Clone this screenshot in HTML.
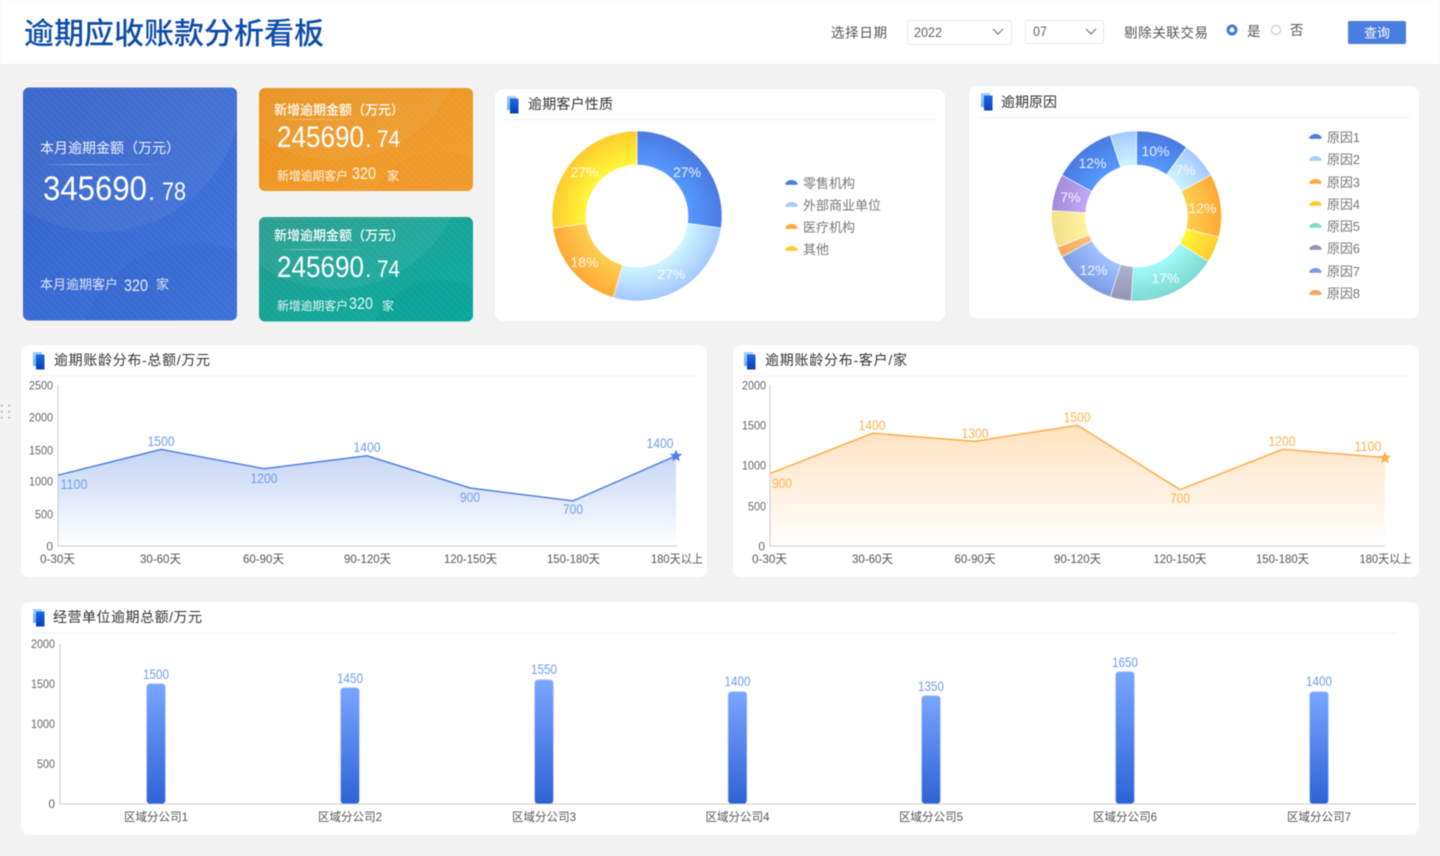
<!DOCTYPE html>
<html lang="zh"><head><meta charset="utf-8"><title>逾期应收账款分析看板</title>
<style>
html,body{margin:0;padding:0;background:#f2f2f2;width:1440px;height:856px;overflow:hidden}
svg{display:block;filter:blur(.4px)}
text{font-family:"Liberation Sans","Noto Sans CJK SC",sans-serif}
.pt{font-size:14px;fill:#333}
.lg{font-size:13px;fill:#777}
.ax{font-size:12px;fill:#666}
.xl{font-size:12px;fill:#555;text-anchor:middle}
.bl{font-size:13.5px;fill:#6f9cf2;text-anchor:middle}
.ol{font-size:13.5px;fill:#ffb44f;text-anchor:middle}
.pl{font-size:14px;fill:#fff;fill-opacity:.88;text-anchor:middle}
.w{fill:#fff}
.sub{font-size:12px;fill:#fff;fill-opacity:.88}
.hd{font-size:13.5px;fill:#555}
</style></head><body>
<svg xmlns="http://www.w3.org/2000/svg" width="1440" height="856" viewBox="0 0 1440 856">
<defs>
<linearGradient id="cb" x1="0" y1="0" x2="1" y2="1"><stop offset="0" stop-color="#3060c6"/><stop offset="1" stop-color="#4274de"/></linearGradient>
<linearGradient id="co" x1="0" y1="0" x2="1" y2="1"><stop offset="0" stop-color="#e68f18"/><stop offset="1" stop-color="#f6a232"/></linearGradient>
<linearGradient id="ct" x1="0" y1="0" x2="1" y2="1"><stop offset="0" stop-color="#219a8b"/><stop offset="1" stop-color="#0aafa2"/></linearGradient>
<pattern id="st" width="5" height="5" patternUnits="userSpaceOnUse" patternTransform="rotate(45)"><rect width="5" height="1.6" fill="#fff" fill-opacity=".04"/></pattern>
<linearGradient id="ln" x1="0" x2="1" y1="0" y2="0"><stop offset="0" stop-color="#fff" stop-opacity=".05"/><stop offset=".3" stop-color="#fff" stop-opacity=".4"/><stop offset="1" stop-color="#fff" stop-opacity="0"/></linearGradient>
<clipPath id="c1"><rect x="23" y="87.5" width="214" height="233" rx="6"/></clipPath>
<clipPath id="c2"><rect x="259" y="88" width="214" height="103" rx="6"/></clipPath>
<clipPath id="c3"><rect x="259" y="217" width="214" height="104.500" rx="6"/></clipPath>
<linearGradient id="i1" x1="0" x2="0" y1="0" y2="1"><stop offset="0" stop-color="#a5d0fb"/><stop offset="1" stop-color="#6fa8f5"/></linearGradient>
<linearGradient id="i2" x1="0" x2="0" y1="0" y2="1"><stop offset="0" stop-color="#1a6be6"/><stop offset="1" stop-color="#0a3fb4"/></linearGradient>
<symbol id="ic" overflow="visible"><rect x="0" y="0" width="9" height="14" fill="url(#i1)"/><rect x="3" y="2.500" width="8.500" height="15" fill="url(#i2)"/></symbol>
<radialGradient id="a1" gradientUnits="userSpaceOnUse" cx="637" cy="216" r="85"><stop offset=".6" stop-color="#5599ff"/><stop offset="1" stop-color="#4a7ae0"/></radialGradient>
<radialGradient id="a2" gradientUnits="userSpaceOnUse" cx="637" cy="216" r="85"><stop offset=".6" stop-color="#d0f6ff"/><stop offset="1" stop-color="#a4c8ff"/></radialGradient>
<radialGradient id="a3" gradientUnits="userSpaceOnUse" cx="637" cy="216" r="85"><stop offset=".6" stop-color="#ffcf50"/><stop offset="1" stop-color="#ffa836"/></radialGradient>
<radialGradient id="a4" gradientUnits="userSpaceOnUse" cx="637" cy="216" r="85"><stop offset=".6" stop-color="#fff73a"/><stop offset="1" stop-color="#ffcb2f"/></radialGradient>
<radialGradient id="b1" gradientUnits="userSpaceOnUse" cx="1136.500" cy="216" r="85"><stop offset=".6" stop-color="#5599ff"/><stop offset="1" stop-color="#4a7ae0"/></radialGradient>
<radialGradient id="b2" gradientUnits="userSpaceOnUse" cx="1136.500" cy="216" r="85"><stop offset=".6" stop-color="#d0f6ff"/><stop offset="1" stop-color="#a4c8ff"/></radialGradient>
<radialGradient id="b3" gradientUnits="userSpaceOnUse" cx="1136.500" cy="216" r="85"><stop offset=".6" stop-color="#ffcf50"/><stop offset="1" stop-color="#ffa836"/></radialGradient>
<radialGradient id="b4" gradientUnits="userSpaceOnUse" cx="1136.500" cy="216" r="85"><stop offset=".6" stop-color="#fff73a"/><stop offset="1" stop-color="#ffcb2f"/></radialGradient>
<radialGradient id="b5" gradientUnits="userSpaceOnUse" cx="1136.500" cy="216" r="85"><stop offset=".6" stop-color="#a0fbfb"/><stop offset="1" stop-color="#7ed9d0"/></radialGradient>
<radialGradient id="b6" gradientUnits="userSpaceOnUse" cx="1136.500" cy="216" r="85"><stop offset=".6" stop-color="#b0b0d0"/><stop offset="1" stop-color="#9494b4"/></radialGradient>
<radialGradient id="b7" gradientUnits="userSpaceOnUse" cx="1136.500" cy="216" r="85"><stop offset=".6" stop-color="#a0c4ff"/><stop offset="1" stop-color="#7b9ae6"/></radialGradient>
<radialGradient id="b8" gradientUnits="userSpaceOnUse" cx="1136.500" cy="216" r="85"><stop offset=".6" stop-color="#ffc27a"/><stop offset="1" stop-color="#f3a65e"/></radialGradient>
<radialGradient id="b9" gradientUnits="userSpaceOnUse" cx="1136.500" cy="216" r="85"><stop offset=".6" stop-color="#fff3a0"/><stop offset="1" stop-color="#f3e08a"/></radialGradient>
<radialGradient id="b10" gradientUnits="userSpaceOnUse" cx="1136.500" cy="216" r="85"><stop offset=".6" stop-color="#c4a8f8"/><stop offset="1" stop-color="#a08ad8"/></radialGradient>
<linearGradient id="fb" x1="0" x2="0" y1="0" y2="1"><stop offset="0" stop-color="#4a7de0" stop-opacity=".33"/><stop offset="1" stop-color="#4a7de0" stop-opacity="0"/></linearGradient>
<linearGradient id="fo" x1="0" x2="0" y1="0" y2="1"><stop offset="0" stop-color="#ffa63c" stop-opacity=".33"/><stop offset="1" stop-color="#ffa63c" stop-opacity="0"/></linearGradient>
<linearGradient id="bar" x1="0" x2="0" y1="0" y2="1"><stop offset="0" stop-color="#7aa6ff"/><stop offset="1" stop-color="#2e62d6"/></linearGradient>
<symbol id="fan" overflow="visible"><path d="M0 4.500C1.500 1.500 4 .5 6.500 .5S11.500 1.500 13 4.500L10.500 5.800Q9.500 4.500 8.500 5.800Q6.500 4.500 4.500 5.800Q3.500 4.500 2.500 5.800Z"/></symbol>
</defs>

<rect width="1440" height="856" fill="#f2f2f2"/>
<rect width="1440" height="64" fill="#fff"/>
<text x="24" y="44" font-size="30" font-weight="500" fill="#0d4cab" textLength="300" lengthAdjust="spacingAndGlyphs">逾期应收账款分析看板</text>

<!-- filters -->
<text x="831" y="37.500" class="hd" textLength="56">选择日期</text>
<rect x="907.500" y="20.500" width="104" height="24" rx="2" fill="#fff" stroke="#e8e8e8"/>
<text x="914" y="37" font-size="13.500" fill="#666" textLength="28" lengthAdjust="spacingAndGlyphs">2022</text>
<path d="M993 29l5 5 5-5" fill="none" stroke="#777" stroke-width="1.200"/>
<rect x="1025.500" y="20.500" width="78" height="23" rx="2" fill="#fff" stroke="#e8e8e8"/>
<text x="1033" y="36" font-size="13.500" fill="#666" textLength="14" lengthAdjust="spacingAndGlyphs">07</text>
<path d="M1086 29l5 5 5-5" fill="none" stroke="#777" stroke-width="1.200"/>
<text x="1124" y="37.500" class="hd" textLength="84">剔除关联交易</text>
<circle cx="1232" cy="30" r="4" fill="#fff" stroke="#3a78dc" stroke-width="3"/>
<text x="1247" y="36" class="hd" font-size="13.500" textLength="14">是</text>
<circle cx="1276" cy="30" r="4.500" fill="#fff" stroke="#c8ccd4" stroke-width="1.200"/>
<text x="1290" y="35" class="hd" font-size="13.500" textLength="14">否</text>
<rect x="1348" y="21" width="58" height="23" rx="1.500" fill="#4a7de0"/>
<text x="1364" y="37.500" font-size="13" class="w" textLength="26">查询</text>

<!-- blue card -->
<g clip-path="url(#c1)">
<rect x="23" y="87.500" width="214" height="233" fill="url(#cb)"/>
<circle cx="100" cy="90" r="142" fill="#fff" fill-opacity=".05"/>
<circle cx="195" cy="360" r="117" fill="#1f4fb8" fill-opacity=".12"/>
<rect x="23" y="87.500" width="214" height="233" fill="url(#st)"/>
</g>
<text x="40" y="153" font-size="14" class="w" fill-opacity=".92" textLength="140">本月逾期金额（万元）</text>
<rect x="45" y="164" width="120" height="1" fill="url(#ln)"/>
<text x="43" y="200" font-size="34" class="w" textLength="104" lengthAdjust="spacingAndGlyphs">345690</text>
<text x="148" y="200" font-size="26" class="w" fill-opacity=".9">.</text>
<text x="162" y="200" font-size="25" class="w" textLength="24" lengthAdjust="spacingAndGlyphs">78</text>
<text x="40" y="289" font-size="13" class="w" fill-opacity=".82" textLength="78">本月逾期客户</text>
<text x="124" y="291" font-size="17" class="w" fill-opacity=".88" textLength="24" lengthAdjust="spacingAndGlyphs">320</text>
<text x="156" y="289" font-size="13" class="w" fill-opacity=".82">家</text>

<!-- orange card -->
<g clip-path="url(#c2)">
<rect x="259" y="88" width="214" height="103" fill="url(#co)"/>
<circle cx="335" cy="30" r="130" fill="#fff" fill-opacity=".06"/>
<circle cx="440" cy="225" r="74" fill="#c87a10" fill-opacity=".1"/>
<rect x="259" y="88" width="214" height="103" fill="url(#st)"/>
</g>
<text x="274" y="114.500" font-size="13" class="w" font-weight="500" textLength="130">新增逾期金额（万元）</text>
<rect x="280" y="119" width="85" height="1" fill="url(#ln)"/>
<text x="277" y="147" font-size="30" class="w" textLength="87" lengthAdjust="spacingAndGlyphs">245690</text>
<text x="365" y="147" font-size="24" class="w" fill-opacity=".9">.</text>
<text x="377" y="147" font-size="24" class="w" textLength="23" lengthAdjust="spacingAndGlyphs">74</text>
<text x="277" y="180" class="sub" textLength="71">新增逾期客户</text>
<text x="352" y="179" font-size="17" class="w" fill-opacity=".9" textLength="24" lengthAdjust="spacingAndGlyphs">320</text>
<text x="387" y="180" class="sub" font-size="11">家</text>

<!-- teal card -->
<g clip-path="url(#c3)">
<rect x="259" y="217" width="214" height="104.500" fill="url(#ct)"/>
<circle cx="335" cy="159" r="130" fill="#fff" fill-opacity=".06"/>
<circle cx="440" cy="354" r="74" fill="#00786c" fill-opacity=".1"/>
<rect x="259" y="217" width="214" height="104.500" fill="url(#st)"/>
</g>
<text x="274" y="240" font-size="13" class="w" font-weight="500" textLength="130">新增逾期金额（万元）</text>
<rect x="280" y="249" width="85" height="1" fill="url(#ln)"/>
<text x="277" y="277" font-size="30" class="w" textLength="87" lengthAdjust="spacingAndGlyphs">245690</text>
<text x="365" y="277" font-size="24" class="w" fill-opacity=".9">.</text>
<text x="377" y="277" font-size="24" class="w" textLength="23" lengthAdjust="spacingAndGlyphs">74</text>
<text x="277" y="310" class="sub" textLength="71">新增逾期客户</text>
<text x="349" y="309" font-size="17" class="w" fill-opacity=".9" textLength="24" lengthAdjust="spacingAndGlyphs">320</text>
<text x="382" y="310" class="sub" font-size="11">家</text>

<!-- donut panel 1 -->
<rect x="495" y="89" width="450" height="232" rx="8" fill="#fff"/>
<use href="#ic" x="507" y="96"/>
<text x="528" y="109" class="pt" textLength="85">逾期客户性质</text>
<rect x="504" y="119" width="432" height="1" fill="#f1f2f4"/>
<g stroke="#fff" stroke-opacity=".75" stroke-width=".8">
<path fill="url(#a1)" d="M637 131A85 85 0 0 1 721.130 228.100L687.480 223.260A51 51 0 0 0 637 165Z"/>
<path fill="url(#a2)" d="M721.130 228.100A85 85 0 0 1 613.050 297.560L622.630 264.930A51 51 0 0 0 687.480 223.260Z"/>
<path fill="url(#a3)" d="M613.050 297.560A85 85 0 0 1 552.870 228.100L586.520 223.260A51 51 0 0 0 622.630 264.930Z"/>
<path fill="url(#a4)" d="M552.870 228.100A85 85 0 0 1 637 131L637 165A51 51 0 0 0 586.520 223.260Z"/>
</g>
<text x="687" y="177" class="pl">27%</text><text x="671.500" y="279" class="pl">27%</text><text x="584.500" y="267" class="pl">18%</text><text x="584.500" y="177" class="pl">27%</text>
<use href="#fan" x="785" y="179.500" fill="#4a7de0"/><text x="803" y="188" class="lg">零售机构</text>
<use href="#fan" x="785" y="201.500" fill="#a6cbff"/><text x="803" y="210" class="lg">外部商业单位</text>
<use href="#fan" x="785" y="223.500" fill="#ffa83a"/><text x="803" y="232" class="lg">医疗机构</text>
<use href="#fan" x="785" y="245.500" fill="#ffcb30"/><text x="803" y="254" class="lg">其他</text>

<!-- donut panel 2 -->
<rect x="969" y="86" width="450" height="232.500" rx="8" fill="#fff"/>
<use href="#ic" x="981" y="93"/>
<text x="1001" y="107" class="pt" textLength="56">逾期原因</text>
<rect x="978" y="117" width="432" height="1" fill="#f1f2f4"/>
<g stroke="#fff" stroke-opacity=".75" stroke-width=".8">
<path fill="url(#b1)" d="M1136.500 131A85 85 0 0 1 1186.460 147.240L1166.480 174.740A51 51 0 0 0 1136.500 165Z"/>
<path fill="url(#b2)" d="M1186.460 147.240A85 85 0 0 1 1210.990 175.050L1181.190 191.430A51 51 0 0 0 1166.480 174.740Z"/>
<path fill="url(#b3)" d="M1210.990 175.050A85 85 0 0 1 1218.830 237.140L1185.900 228.680A51 51 0 0 0 1181.190 191.430Z"/>
<path fill="url(#b4)" d="M1218.830 237.140A85 85 0 0 1 1208.270 261.540L1179.560 243.330A51 51 0 0 0 1185.900 228.680Z"/>
<path fill="url(#b5)" d="M1208.270 261.540A85 85 0 0 1 1131.160 300.830L1133.300 266.900A51 51 0 0 0 1179.560 243.330Z"/>
<path fill="url(#b6)" d="M1131.160 300.830A85 85 0 0 1 1110.240 296.840L1120.740 264.510A51 51 0 0 0 1133.300 266.900Z"/>
<path fill="url(#b7)" d="M1110.240 296.840A85 85 0 0 1 1062.010 256.950L1091.810 240.570A51 51 0 0 0 1120.740 264.510Z"/>
<path fill="url(#b8)" d="M1062.010 256.950A85 85 0 0 1 1057.470 247.290L1089.080 234.770A51 51 0 0 0 1091.810 240.570Z"/>
<path fill="url(#b9)" d="M1057.470 247.290A85 85 0 0 1 1051.670 210.660L1085.600 212.800A51 51 0 0 0 1089.080 234.770Z"/>
<path fill="url(#b10)" d="M1051.670 210.660A85 85 0 0 1 1062.010 175.050L1091.810 191.430A51 51 0 0 0 1085.600 212.800Z"/>
<path fill="url(#b1)" d="M1062.010 175.050A85 85 0 0 1 1110.240 135.160L1120.740 167.490A51 51 0 0 0 1091.810 191.430Z"/>
<path fill="url(#b2)" d="M1110.240 135.160A85 85 0 0 1 1136.500 131L1136.500 165A51 51 0 0 0 1120.740 167.490Z"/>
</g>
<text x="1155.500" y="156" class="pl">10%</text><text x="1185.500" y="175" class="pl">7%</text><text x="1202.500" y="213" class="pl">12%</text><text x="1165.500" y="283" class="pl">17%</text><text x="1093.500" y="275" class="pl">12%</text><text x="1070.500" y="202" class="pl">7%</text><text x="1092.500" y="168" class="pl">12%</text>
<use href="#fan" x="1309" y="133.500" fill="#4a7de0"/><text x="1327" y="142" class="lg" textLength="33">原因1</text>
<use href="#fan" x="1309" y="155.500" fill="#a6cbff"/><text x="1327" y="164" class="lg" textLength="33">原因2</text>
<use href="#fan" x="1309" y="178.500" fill="#ffa83a"/><text x="1327" y="187" class="lg" textLength="33">原因3</text>
<use href="#fan" x="1309" y="200.500" fill="#ffcb30"/><text x="1327" y="209" class="lg" textLength="33">原因4</text>
<use href="#fan" x="1309" y="222.500" fill="#7ed9d0"/><text x="1327" y="231" class="lg" textLength="33">原因5</text>
<use href="#fan" x="1309" y="244.500" fill="#9494b4"/><text x="1327" y="253" class="lg" textLength="33">原因6</text>
<use href="#fan" x="1309" y="267.500" fill="#7b9ae6"/><text x="1327" y="276" class="lg" textLength="33">原因7</text>
<use href="#fan" x="1309" y="289.500" fill="#f3a65e"/><text x="1327" y="298" class="lg" textLength="33">原因8</text>

<!-- drag handle -->
<g fill="#9a9a9a"><rect x="1" y="405" width="1.500" height="1.500"/><rect x="8.500" y="405" width="1.500" height="1.500"/><rect x="1" y="411" width="1.500" height="1.500"/><rect x="8.500" y="411" width="1.500" height="1.500"/><rect x="1" y="417" width="1.500" height="1.500"/><rect x="8.500" y="417" width="1.500" height="1.500"/></g>

<!-- line chart 1 -->
<rect x="21" y="345" width="686" height="232" rx="8" fill="#fff"/>
<use href="#ic" x="33" y="352"/>
<text x="54" y="365" class="pt" textLength="156">逾期账龄分布-总额/万元</text>
<rect x="31" y="375.500" width="667" height="1" fill="#f1f2f4"/>
<path d="M58 475.200L161 449.400L264 468.700L367 455.800L470 488L573 500.900L676 455.800V546H58Z" fill="url(#fb)"/>
<path d="M58 385V546H677" fill="none" stroke="#ccc"/>
<path d="M58 475.200L161 449.400L264 468.700L367 455.800L470 488L573 500.900L676 455.800" fill="none" stroke="#4f80e6" stroke-width="1.500"/>
<path d="M676 449.500l1.700 4.200 4.500.3-3.500 2.900 1.100 4.400-3.800-2.400-3.800 2.400 1.100-4.400-3.500-2.900 4.500-.3z" fill="#4f80e6"/>
<text x="53" y="389.500" text-anchor="end" class="ax" textLength="24" lengthAdjust="spacingAndGlyphs">2500</text>
<text x="53" y="421.500" text-anchor="end" class="ax" textLength="24" lengthAdjust="spacingAndGlyphs">2000</text>
<text x="53" y="454.500" text-anchor="end" class="ax" textLength="24" lengthAdjust="spacingAndGlyphs">1500</text>
<text x="53" y="485.500" text-anchor="end" class="ax" textLength="24" lengthAdjust="spacingAndGlyphs">1000</text>
<text x="53" y="518.500" text-anchor="end" class="ax" textLength="18" lengthAdjust="spacingAndGlyphs">500</text>
<text x="53" y="550.500" text-anchor="end" class="ax">0</text>
<text x="57.500" y="563" class="xl" textLength="35" lengthAdjust="spacingAndGlyphs">0-30天</text>
<text x="160.500" y="563" class="xl" textLength="41" lengthAdjust="spacingAndGlyphs">30-60天</text>
<text x="263.500" y="563" class="xl" textLength="41" lengthAdjust="spacingAndGlyphs">60-90天</text>
<text x="367.500" y="563" class="xl" textLength="47" lengthAdjust="spacingAndGlyphs">90-120天</text>
<text x="470.500" y="563" class="xl" textLength="53" lengthAdjust="spacingAndGlyphs">120-150天</text>
<text x="573.500" y="563" class="xl" textLength="53" lengthAdjust="spacingAndGlyphs">150-180天</text>
<text x="677" y="563" class="xl" textLength="52" lengthAdjust="spacingAndGlyphs">180天以上</text>
<text x="74" y="489" class="bl" textLength="27" lengthAdjust="spacingAndGlyphs">1100</text>
<text x="161" y="446" class="bl" textLength="27" lengthAdjust="spacingAndGlyphs">1500</text>
<text x="264" y="483" class="bl" textLength="27" lengthAdjust="spacingAndGlyphs">1200</text>
<text x="367" y="452" class="bl" textLength="27" lengthAdjust="spacingAndGlyphs">1400</text>
<text x="470" y="502" class="bl" textLength="20" lengthAdjust="spacingAndGlyphs">900</text>
<text x="573" y="514" class="bl" textLength="20" lengthAdjust="spacingAndGlyphs">700</text>
<text x="660" y="448" class="bl" textLength="27" lengthAdjust="spacingAndGlyphs">1400</text>

<!-- line chart 2 -->
<rect x="733" y="345" width="686" height="232" rx="8" fill="#fff"/>
<use href="#ic" x="744" y="352"/>
<text x="765" y="365" class="pt" textLength="142">逾期账龄分布-客户/家</text>
<rect x="742" y="375.500" width="667" height="1" fill="#f1f2f4"/>
<path d="M770 473.600L872.500 433.300L975 441.350L1077.500 425.250L1180 489.650L1282.500 449.400L1385 457.450V546H770Z" fill="url(#fo)"/>
<path d="M770 385V546H1385" fill="none" stroke="#ccc"/>
<path d="M770 473.600L872.500 433.300L975 441.350L1077.500 425.250L1180 489.650L1282.500 449.400L1385 457.450" fill="none" stroke="#ffad47" stroke-width="1.500"/>
<path d="M1385 451.500l1.700 4.200 4.500.3-3.500 2.900 1.100 4.400-3.800-2.400-3.800 2.400 1.100-4.400-3.500-2.900 4.500-.3z" fill="#ffad47"/>
<text x="766" y="389.500" text-anchor="end" class="ax" textLength="24" lengthAdjust="spacingAndGlyphs">2000</text>
<text x="766" y="429.500" text-anchor="end" class="ax" textLength="24" lengthAdjust="spacingAndGlyphs">1500</text>
<text x="766" y="469.500" text-anchor="end" class="ax" textLength="24" lengthAdjust="spacingAndGlyphs">1000</text>
<text x="766" y="510.500" text-anchor="end" class="ax" textLength="18" lengthAdjust="spacingAndGlyphs">500</text>
<text x="765" y="550.500" text-anchor="end" class="ax">0</text>
<text x="769.500" y="563" class="xl" textLength="35" lengthAdjust="spacingAndGlyphs">0-30天</text>
<text x="872.500" y="563" class="xl" textLength="41" lengthAdjust="spacingAndGlyphs">30-60天</text>
<text x="975" y="563" class="xl" textLength="41" lengthAdjust="spacingAndGlyphs">60-90天</text>
<text x="1077.500" y="563" class="xl" textLength="47" lengthAdjust="spacingAndGlyphs">90-120天</text>
<text x="1180" y="563" class="xl" textLength="53" lengthAdjust="spacingAndGlyphs">120-150天</text>
<text x="1282.500" y="563" class="xl" textLength="53" lengthAdjust="spacingAndGlyphs">150-180天</text>
<text x="1385.500" y="563" class="xl" textLength="52" lengthAdjust="spacingAndGlyphs">180天以上</text>
<text x="782" y="488" class="ol" textLength="20" lengthAdjust="spacingAndGlyphs">900</text>
<text x="872" y="430" class="ol" textLength="27" lengthAdjust="spacingAndGlyphs">1400</text>
<text x="975" y="438" class="ol" textLength="27" lengthAdjust="spacingAndGlyphs">1300</text>
<text x="1077" y="422" class="ol" textLength="27" lengthAdjust="spacingAndGlyphs">1500</text>
<text x="1180" y="503" class="ol" textLength="20" lengthAdjust="spacingAndGlyphs">700</text>
<text x="1282" y="446" class="ol" textLength="27" lengthAdjust="spacingAndGlyphs">1200</text>
<text x="1368" y="451" class="ol" textLength="27" lengthAdjust="spacingAndGlyphs">1100</text>

<!-- bar chart -->
<rect x="21" y="602" width="1398" height="233" rx="8" fill="#fff"/>
<use href="#ic" x="33" y="609"/>
<text x="53" y="622" class="pt" textLength="149">经营单位逾期总额/万元</text>
<rect x="31" y="632.500" width="1367" height="1" fill="#f1f2f4"/>
<path d="M60 644V804H1416" fill="none" stroke="#ccc"/>
<text x="55" y="648" text-anchor="end" class="ax" textLength="24" lengthAdjust="spacingAndGlyphs">2000</text>
<text x="55" y="688" text-anchor="end" class="ax" textLength="24" lengthAdjust="spacingAndGlyphs">1500</text>
<text x="55" y="728" text-anchor="end" class="ax" textLength="24" lengthAdjust="spacingAndGlyphs">1000</text>
<text x="55" y="768" text-anchor="end" class="ax" textLength="18" lengthAdjust="spacingAndGlyphs">500</text>
<text x="55" y="808" text-anchor="end" class="ax">0</text>
<g fill="url(#bar)" stroke="#cfdcf8" stroke-width=".7">
<rect x="146.500" y="683.500" width="19" height="120.500" rx="3.500"/>
<rect x="340.500" y="687.500" width="19" height="116.500" rx="3.500"/>
<rect x="534.500" y="679.500" width="19" height="124.500" rx="3.500"/>
<rect x="728" y="691.500" width="19" height="112.500" rx="3.500"/>
<rect x="921.500" y="695.500" width="19" height="108.500" rx="3.500"/>
<rect x="1115.500" y="671.500" width="19" height="132.500" rx="3.500"/>
<rect x="1309.500" y="691.500" width="19" height="112.500" rx="3.500"/>
</g>
<text x="156" y="679" class="bl" textLength="26" lengthAdjust="spacingAndGlyphs">1500</text>
<text x="350" y="683" class="bl" textLength="26" lengthAdjust="spacingAndGlyphs">1450</text>
<text x="544" y="674" class="bl" textLength="26" lengthAdjust="spacingAndGlyphs">1550</text>
<text x="737.500" y="686" class="bl" textLength="26" lengthAdjust="spacingAndGlyphs">1400</text>
<text x="931" y="691" class="bl" textLength="26" lengthAdjust="spacingAndGlyphs">1350</text>
<text x="1125" y="667" class="bl" textLength="26" lengthAdjust="spacingAndGlyphs">1650</text>
<text x="1319" y="686" class="bl" textLength="26" lengthAdjust="spacingAndGlyphs">1400</text>
<text x="156" y="821" class="xl" textLength="64" lengthAdjust="spacingAndGlyphs">区域分公司1</text>
<text x="350" y="821" class="xl" textLength="64" lengthAdjust="spacingAndGlyphs">区域分公司2</text>
<text x="544" y="821" class="xl" textLength="64" lengthAdjust="spacingAndGlyphs">区域分公司3</text>
<text x="737.500" y="821" class="xl" textLength="64" lengthAdjust="spacingAndGlyphs">区域分公司4</text>
<text x="931" y="821" class="xl" textLength="64" lengthAdjust="spacingAndGlyphs">区域分公司5</text>
<text x="1125" y="821" class="xl" textLength="64" lengthAdjust="spacingAndGlyphs">区域分公司6</text>
<text x="1319" y="821" class="xl" textLength="64" lengthAdjust="spacingAndGlyphs">区域分公司7</text>
</svg>
</body></html>
